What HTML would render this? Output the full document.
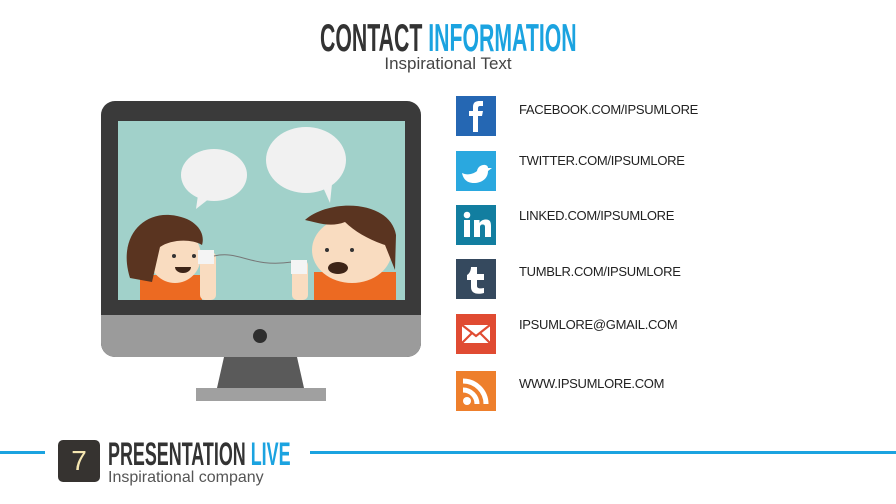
<!DOCTYPE html>
<html><head><meta charset="utf-8"><style>
body{margin:0;width:896px;height:504px;background:#fff;position:relative;overflow:hidden;font-family:"Liberation Sans",sans-serif}
.t{position:absolute;font-family:"Liberation Sans",sans-serif;font-weight:bold;white-space:nowrap;transform-origin:0 0}
.ic{position:absolute;left:456px;width:40px;height:40px}
.lb{position:absolute;left:519px;font-size:13px;color:#222;white-space:nowrap;letter-spacing:-0.3px}
</style></head><body>
<div class="t" style="left:320px;top:17px;font-size:39px;color:#333;transform:scaleX(0.545)">CONTACT <span style="color:#1ba3e0">INFORMATION</span></div>
<div style="position:absolute;left:0;width:896px;top:54px;text-align:center;font-size:17px;color:#444">Inspirational Text</div>

<svg style="position:absolute;left:0;top:0" width="440" height="410">
<rect x="101" y="101" width="320" height="256" rx="14" fill="#3a3a3a"/>
<path d="M101 315 H421 V343 a14 14 0 0 1 -14 14 H115 a14 14 0 0 1 -14 -14Z" fill="#9b9b9b"/>
<circle cx="260" cy="336" r="7" fill="#2e2e2e"/>
<path d="M224 357 H297 L304 388 H217Z" fill="#5a5a5a"/>
<rect x="196" y="388" width="130" height="13" fill="#a0a0a0"/>
<rect x="118" y="121" width="287" height="179" fill="#a1d1ca"/>
<ellipse cx="214" cy="175" rx="33" ry="26" fill="#f1f1f1"/><path d="M198 195 L196 209 L210 198Z" fill="#f1f1f1"/>
<ellipse cx="306" cy="160" rx="40" ry="33" fill="#f1f1f1"/><path d="M322 185 L330 203 L332 184Z" fill="#f1f1f1"/>
<rect x="140" y="275" width="62" height="25" fill="#ec6a22"/>
<ellipse cx="175" cy="256" rx="26" ry="27" fill="#f9dcc0"/>
<path d="M130 278 C118 240 140 213 170 215 C195 217 206 232 202 245 C190 238 170 240 160 247 L152 282Z" fill="#5a3420"/>
<rect x="200" y="252" width="16" height="48" rx="5" fill="#f9dcc0"/><rect x="198" y="250" width="16" height="14" fill="#f4f4f4"/>
<circle cx="174" cy="256" r="2" fill="#333"/><circle cx="194" cy="256" r="2" fill="#333"/>
<path d="M175 267 a8 6 0 0 0 16 0Z" fill="#3d2417"/>
<path d="M214 256 C240 250 250 268 292 262" stroke="#777" fill="none"/>
<rect x="314" y="272" width="82" height="28" fill="#ec6a22"/>
<ellipse cx="352" cy="250" rx="40" ry="33" fill="#f9dcc0"/>
<path d="M305 220 C330 198 390 200 396 235 L395 270 L385 245 C370 240 355 232 345 222 C330 228 315 222 305 220Z" fill="#5a3420"/>
<rect x="292" y="260" width="16" height="40" rx="5" fill="#f9dcc0"/><rect x="291" y="260" width="16" height="14" fill="#f4f4f4"/>
<circle cx="327" cy="250" r="2" fill="#333"/><circle cx="352" cy="250" r="2" fill="#333"/>
<ellipse cx="338" cy="268" rx="10" ry="6" fill="#3d2417"/>
</svg>

<svg class="ic" style="top:96px" viewBox="0 0 40 40"><rect width="40" height="40" fill="#2567b3"/><path d="M17 36 V20 H13 V15 H17 V11 C17 6 20 5 24 5 H27 V10 H24 C22.5 10 22 11 22 12 V15 H27 L26 20 H22 V36Z" fill="#fff"/></svg>
<svg class="ic" style="top:151px" viewBox="0 0 40 40"><rect width="40" height="40" fill="#2aa8df"/><path d="M6 22 C10 24 16 24 21 20 C22 13 32 12 32 17 L36 17 L32 20 C32 28 25 32 18 32 C10 32 7 27 6 22Z" fill="#fff"/></svg>
<svg class="ic" style="top:205px" viewBox="0 0 40 40"><rect width="40" height="40" fill="#127ea0"/><rect x="8" y="15" width="6" height="17" fill="#fff"/><circle cx="11" cy="10" r="3.3" fill="#fff"/><path d="M18 15 H23.5 V18 C25 15 28 14.5 30 14.5 C34 14.5 35 17 35 21 V32 H29 V22 C29 20 28 19.5 26.5 19.5 C25 19.5 24 20.5 24 22 V32 H18Z" fill="#fff"/></svg>
<svg class="ic" style="top:259px" viewBox="0 0 40 40"><rect width="40" height="40" fill="#35495e"/><path d="M15 8 H21 V15 H28 V21 H21 V27 C21 29 23 30 28 29 V34 C20 36 15 34 15 28 V21 H11 V16 C13 15 15 12 15 8Z" fill="#fff"/></svg>
<svg class="ic" style="top:314px" viewBox="0 0 40 40"><rect width="40" height="40" fill="#e04b32"/><rect x="6" y="11" width="28" height="18" fill="#fff"/><path d="M6 11 L20 22 L34 11 M6 29 L16 19 M34 29 L24 19" stroke="#e04b32" stroke-width="2.2" fill="none"/></svg>
<svg class="ic" style="top:371px" viewBox="0 0 40 40"><rect width="40" height="40" fill="#ee7f2c"/><circle cx="11" cy="30" r="4" fill="#fff"/><path d="M7 19 A14 14 0 0 1 21 33 M7 10 A23 23 0 0 1 30 33" stroke="#fff" stroke-width="5" fill="none"/></svg>

<div class="lb" style="top:102px">FACEBOOK.COM/IPSUMLORE</div>
<div class="lb" style="top:153px">TWITTER.COM/IPSUMLORE</div>
<div class="lb" style="top:208px">LINKED.COM/IPSUMLORE</div>
<div class="lb" style="top:264px">TUMBLR.COM/IPSUMLORE</div>
<div class="lb" style="top:317px">IPSUMLORE@GMAIL.COM</div>
<div class="lb" style="top:376px">WWW.IPSUMLORE.COM</div>

<div style="position:absolute;left:0;top:451px;width:45px;height:3px;background:#1ba3e0"></div>
<div style="position:absolute;left:310px;top:451px;width:586px;height:3px;background:#1ba3e0"></div>
<div style="position:absolute;left:58px;top:440px;width:42px;height:42px;border-radius:5px;background:#363330;color:#f5e6b0;font-size:28px;text-align:center;line-height:42px">7</div>
<div class="t" style="left:108px;top:436px;font-size:32px;color:#333;transform:scaleX(0.56)">PRESENTATION <span style="color:#1ba3e0">LIVE</span></div>
<div style="position:absolute;left:108px;top:469px;font-size:16px;color:#555">Inspirational company</div>
</body></html>
